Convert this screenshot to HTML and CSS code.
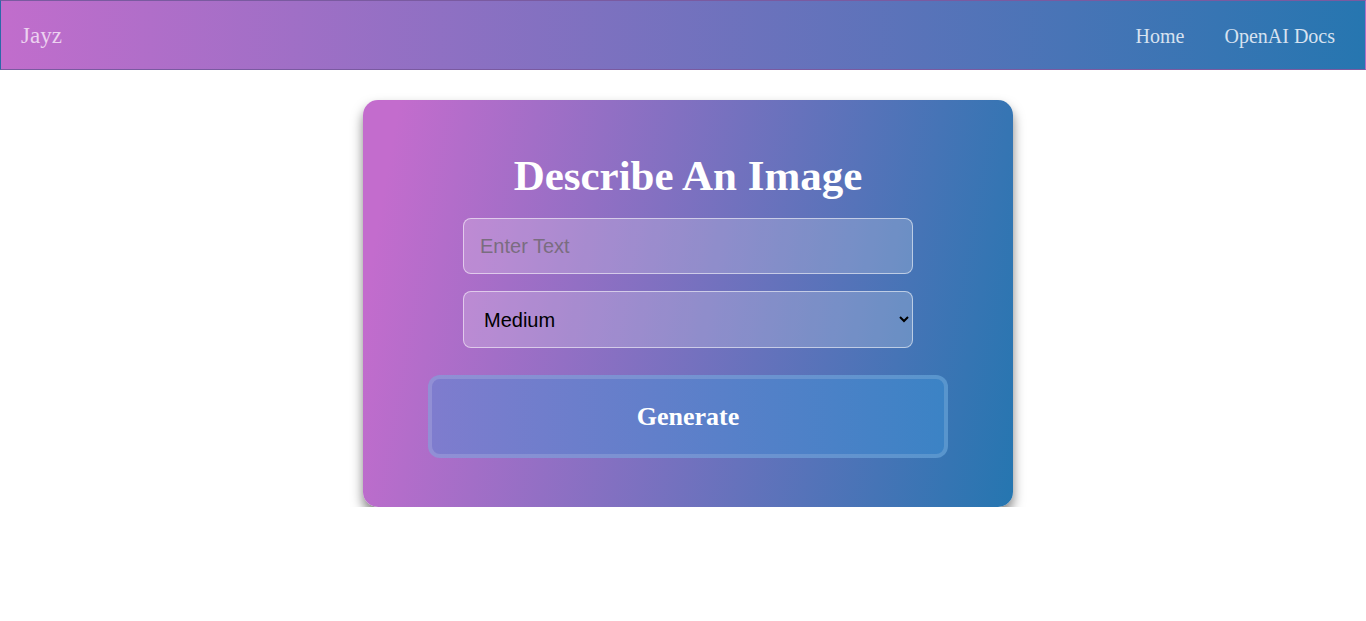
FILE: index.html
```html
<!DOCTYPE html>
<html lang="en">
<head>
<meta charset="utf-8">
<title>Jayz</title>
<link rel="stylesheet" href="styles.css">
</head>
<body>
<nav class="navbar">
  <a class="brand" href="#">Jayz</a>
  <div class="links">
    <a href="#">Home</a>
    <a href="#">OpenAI Docs</a>
  </div>
</nav>
<main class="main">
  <form class="card">
    <h1 class="title">Describe An Image</h1>
    <input class="field" type="text" placeholder="Enter Text">
    <select class="field select">
      <option>Small</option>
      <option selected>Medium</option>
      <option>Large</option>
    </select>
    <button class="btn" type="button">Generate</button>
  </form>
</main>
</body>
</html>
```
FILE: styles.css
```css
* { box-sizing: border-box; }
html, body { margin: 0; padding: 0; background: #fff; }
body { font-family: "Liberation Serif", "DejaVu Serif", serif; }

.navbar {
  height: 70px;
  display: flex;
  align-items: center;
  justify-content: space-between;
  padding: 2px 30px 0 20px;
  background: linear-gradient(90deg, #c16dcc 0%, #2676b0 100%);
  border: 1px solid #7a5aa0;
  border-left-color: #2a6aa8;
  border-right-color: #b06ec8;
}
.brand {
  color: #ecd2f0;
  text-decoration: none;
  font-size: 23px;
}
.links { display: flex; gap: 40px; }
.links a {
  color: #d7e2f0;
  text-decoration: none;
  font-size: 20px;
}

.main {
  display: flex;
  justify-content: center;
  padding-top: 30px;
  padding-left: 10px;
}
.card {
  width: 650px;
  padding: 50px 65px 49px;
  border-radius: 15px;
  background: linear-gradient(100deg, #c36ccd 5%, #2576b0 100%);
  box-shadow: 0 7px 12px rgba(0, 0, 0, 0.5);
  display: flex;
  flex-direction: column;
  align-items: center;
}
.title {
  margin: 0 0 16px;
  color: #fff;
  font-size: 43px;
  line-height: 52px;
  font-weight: bold;
}
.field {
  width: 450px;
  height: 56px;
  border-radius: 8px;
  border: 1px solid rgba(255, 255, 255, 0.55);
  background: rgba(255, 255, 255, 0.2);
  font-family: "Liberation Sans", Arial, sans-serif;
  font-size: 20px;
  padding: 0 16px;
  color: #000;
  outline: none;
}
.field::placeholder { color: #7a6d80; }
.select {
  margin-top: 17px;
  height: 57px;
  padding: 0 16px 0 16px;
}
.btn {
  margin-top: 27px;
  width: 520px;
  height: 83px;
  border-radius: 12px;
  border: 4px solid rgba(255, 255, 255, 0.15);
  background: linear-gradient(90deg, #7f7cce 0%, #3b83c5 100%);
  background-origin: border-box;
  color: #fff;
  font-family: "Liberation Serif", "DejaVu Serif", serif;
  font-size: 26px;
  font-weight: bold;
}
```
